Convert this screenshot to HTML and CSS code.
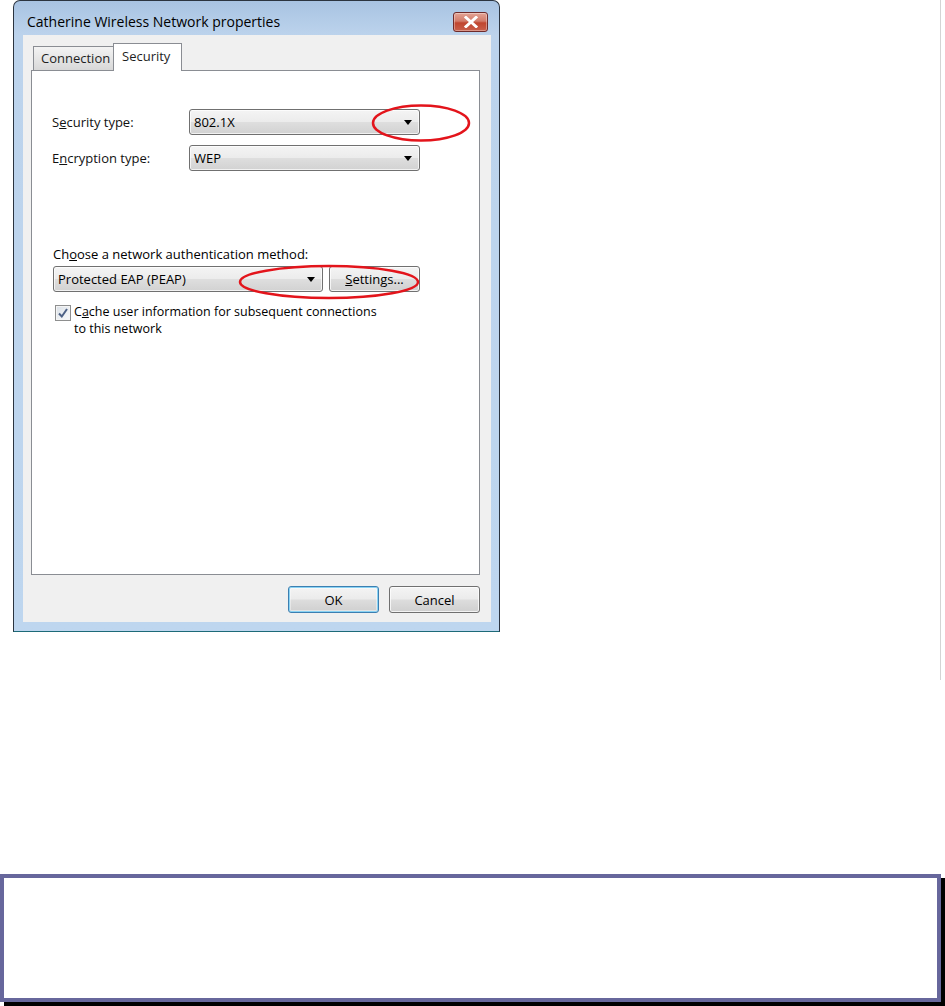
FILE: index.html
```html
<!DOCTYPE html>
<html>
<head>
<meta charset="utf-8">
<link rel="stylesheet" href="styles.css">
</head>
<body>
<div class="page">
  <div class="top">
    <div class="window">
      <div class="titlebar">
        <span class="title">Catherine Wireless Network properties</span>
        <span class="close"><svg width="16" height="12" viewBox="0 0 16 12"><path d="M3 1.5 L13 10.5 M13 1.5 L3 10.5" stroke="#fff" stroke-width="3" stroke-linecap="square"/></svg></span>
      </div>
      <div class="client">
        <div class="tabs">
          <div class="tab">Connection</div>
          <div class="tab active">Security</div>
        </div>
        <div class="panel">
          <div class="row first">
            <span class="label">S<u>e</u>curity type:</span>
            <div class="combo wide"><span>802.1X</span><i class="arrow"></i></div>
          </div>
          <div class="row">
            <span class="label">E<u>n</u>cryption type:</span>
            <div class="combo wide"><span>WEP</span><i class="arrow"></i></div>
          </div>
          <div class="auth-label">Ch<u>o</u>ose a network authentication method:</div>
          <div class="auth-row">
            <div class="combo auth"><span>Protected EAP (PEAP)</span><i class="arrow"></i></div>
            <div class="btn settings"><u>S</u>ettings...</div>
          </div>
          <div class="check-row">
            <span class="checkbox"><svg width="12" height="12" viewBox="0 0 12 12"><path d="M2 6.5 L4.8 9.5 L10 2" fill="none" stroke="#4d6185" stroke-width="2"/></svg></span>
            <div class="check-text">
              <div class="check-line">C<u>a</u>che user information for subsequent connections</div>
              <div class="check-line">to this network</div>
            </div>
          </div>
        </div>
        <div class="buttons">
          <div class="btn default">OK</div>
          <div class="btn">Cancel</div>
        </div>
      </div>
    </div>
  </div>
  <div class="note"></div>
  <svg class="marks" width="945" height="320" viewBox="0 0 945 320">
    <ellipse cx="421" cy="123" rx="48" ry="17.5" fill="none" stroke="#e3141b" stroke-width="2.5"/>
    <ellipse cx="329" cy="282" rx="89" ry="16" fill="none" stroke="#e3141b" stroke-width="2.5"/>
  </svg>
</div>
</body>
</html>
```
FILE: styles.css
```css
* { box-sizing: border-box; }
body {
  margin: 0;
  background: #ffffff;
  font-family: "Open Sans", "Noto Sans", "DejaVu Sans", sans-serif;
  font-size: 13px;
  color: #000;
}
.page {
  position: relative;
  width: 945px;
  height: 1006px;
  overflow: hidden;
}
.top {
  width: 941px;
  height: 680px;
  border-right: 1px solid #d4d4d4;
}
.window {
  margin-left: 13px;
  width: 487px;
  height: 632px;
  border: 1px solid #2b3440;
  border-bottom-color: #1d6a78;
  border-radius: 7px 7px 0 0;
  background: linear-gradient(180deg, #a8c3e2 0px, #bcd3ec 34px, #bed6ef 100%);
  padding: 0 8px 9px 9px;
  display: flex;
  flex-direction: column;
}
.titlebar {
  height: 34px;
  display: flex;
  justify-content: space-between;
  align-items: flex-start;
  padding-left: 4px;
  padding-right: 3px;
}
.title {
  margin-top: 11px;
  font-size: 14px;
  color: #000;
  line-height: 20px;
}
.close {
  margin-top: 11px;
  width: 35px;
  height: 20px;
  border: 1px solid #6e2b2b;
  border-radius: 3px;
  background: linear-gradient(180deg, #e3a495 0%, #d27b6a 45%, #c0452f 55%, #c9604c 100%);
  display: flex;
  align-items: center;
  justify-content: center;
  box-shadow: inset 0 0 0 1px rgba(255,255,255,0.35);
}
.client {
  flex: 1;
  background: #f0f0f0;
  padding: 8px 11px 9px 8px;
  display: flex;
  flex-direction: column;
}
.tabs {
  display: flex;
  align-items: flex-end;
  height: 27px;
  padding-left: 2px;
  position: relative;
  z-index: 1;
}
.tab {
  height: 24px;
  padding: 0 7px;
  border: 1px solid #8a8d93;
  border-bottom: none;
  border-right: none;
  background: linear-gradient(180deg, #f3f3f3 0%, #e6e6e6 50%, #d8d8d8 100%);
  line-height: 23px;
  font-size: 13px;
  color: #1e1e1e;
  width: 80px;
}
.tab.active {
  height: 28px;
  margin-bottom: -1px;
  width: 69px;
  border-right: 1px solid #8a8d93;
  background: #ffffff;
  line-height: 24px;
  padding-left: 8px;
}
.panel {
  height: 505px;
  border: 1px solid #8a8d93;
  background: #ffffff;
  padding: 38px 0 0 20px;
}
.row {
  display: flex;
  align-items: center;
  height: 26px;
  margin-bottom: 10px;
}
.label {
  width: 137px;
  color: #111;
}
.combo {
  height: 26px;
  border: 1px solid #707070;
  border-radius: 3px;
  background: linear-gradient(180deg, #f4f4f4 0%, #ececec 48%, #dedede 52%, #d2d2d2 100%);
  box-shadow: inset 0 0 0 1px rgba(255,255,255,0.7);
  display: flex;
  align-items: center;
  justify-content: space-between;
  padding: 0 7px 0 4px;
}
.combo.wide { width: 231px; }
.combo.auth { width: 270px; }
.arrow {
  width: 0;
  height: 0;
  border-left: 4px solid transparent;
  border-right: 4px solid transparent;
  border-top: 5px solid #000;
}
.auth-label {
  margin-top: 74px;
  padding-left: 1px;
  line-height: 18px;
  height: 18px;
}
.auth-row {
  display: flex;
  gap: 6px;
  margin-top: 3px;
  padding-left: 1px;
}
.btn {
  height: 26px;
  width: 91px;
  border: 1px solid #707070;
  border-radius: 3px;
  background: linear-gradient(180deg, #f4f4f4 0%, #ebebeb 48%, #dddddd 52%, #cfcfcf 100%);
  box-shadow: inset 0 0 0 1px rgba(255,255,255,0.75);
  display: flex;
  align-items: center;
  justify-content: center;
}
.check-row {
  display: flex;
  margin-top: 12px;
  padding-left: 3px;
}
.checkbox {
  flex: none;
  width: 16px;
  height: 16px;
  margin-top: 1px;
  border: 1px solid #8e8f8f;
  background: linear-gradient(135deg, #d9dfe6 0%, #eef1f4 60%, #f6f7f8 100%);
  box-shadow: inset 0 0 0 1px #f4f4f4;
  display: flex;
  align-items: center;
  justify-content: center;
}
.check-text {
  margin-left: 3px;
  margin-top: -1px;
}
.check-line {
  font-size: 12.5px;
  line-height: 17px;
  height: 17px;
  white-space: nowrap;
}
.buttons {
  display: flex;
  justify-content: flex-end;
  gap: 10px;
  margin-top: 11px;
}
.buttons .btn { height: 27px; }
.btn.default {
  border-color: #3c7fb1;
  box-shadow: inset 0 0 0 1px #8ad3f4, inset 0 0 0 2px rgba(255,255,255,0.4);
}
.note {
  margin-top: 194px;
  width: 941px;
  height: 128px;
  border: 4px solid #67679c;
  background: #ffffff;
  box-shadow: 4px 4px 0 #000;
}
.marks {
  position: absolute;
  left: 0;
  top: 0;
  pointer-events: none;
}
```
